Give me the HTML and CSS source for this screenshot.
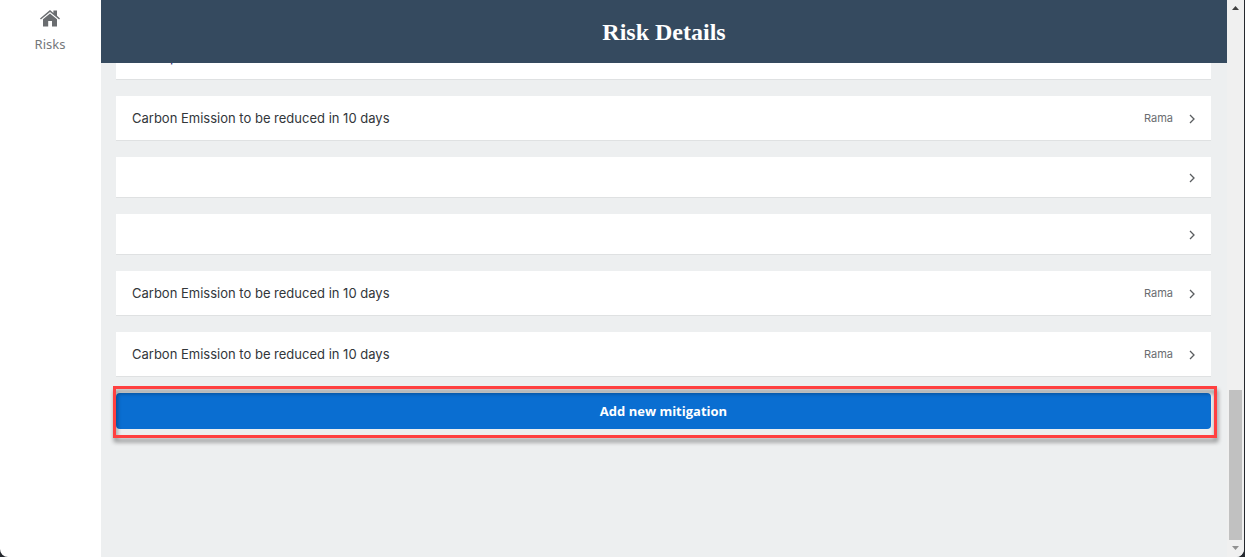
FILE: index.html
```
<!DOCTYPE html>
<html lang="en">
<head>
<meta charset="utf-8">
<title>Risk Details</title>
<link rel="stylesheet" href="styles.css">
</head>
<body>
<svg class="sprite" aria-hidden="true">
  <symbol id="chevron" viewBox="0 0 6 10"><path d="M1 1l4 4-4 4" fill="none" stroke="currentColor" stroke-width="1.3"/></symbol>
</svg>
<div class="window">
  <nav class="sidebar">
    <a class="nav-item" href="#risks">
      <svg class="home" viewBox="0 0 20 17" aria-hidden="true">
        <path d="M10 3.4 17 9.2V16.4H12V11H8.2V16.4H3V9.2Z"/>
        <path d="M0 8.4 10 0l3.4 2.9V.6H17V5.8L20 8.4l-.9 1.1L10 1.9.9 9.5Z"/>
      </svg>
      <span>Risks</span>
    </a>
  </nav>
  <main class="main">
    <header class="header"><h1>Risk Details</h1></header>
    <div class="content">
      <div class="scrolled">
        <ul class="list">
          <li><a class="card" href="#m1"><span class="title linked">To be planned</span><svg class="chevron"><use href="#chevron"/></svg></a></li>
          <li><a class="card" href="#m2"><span class="title">Carbon Emission to be reduced in 10 days</span><span class="owner">Rama</span><svg class="chevron"><use href="#chevron"/></svg></a></li>
          <li><a class="card empty" href="#m3" aria-label="Mitigation"><svg class="chevron"><use href="#chevron"/></svg></a></li>
          <li><a class="card empty" href="#m4" aria-label="Mitigation"><svg class="chevron"><use href="#chevron"/></svg></a></li>
          <li><a class="card" href="#m5"><span class="title">Carbon Emission to be reduced in 10 days</span><span class="owner">Rama</span><svg class="chevron"><use href="#chevron"/></svg></a></li>
          <li><a class="card" href="#m6"><span class="title">Carbon Emission to be reduced in 10 days</span><span class="owner">Rama</span><svg class="chevron"><use href="#chevron"/></svg></a></li>
        </ul>
        <div class="action">
          <button class="add" type="button">Add new mitigation</button>
          <div class="highlight"></div>
        </div>
      </div>
    </div>
  </main>
  <div class="scrollbar" aria-hidden="true">
    <svg class="arrow" viewBox="0 0 7 4"><path d="M0 4 3.5 0 7 4Z"/></svg>
    <div class="track"><div class="thumb"></div></div>
    <svg class="arrow down" viewBox="0 0 7 4"><path d="M0 0 3.5 4 7 0Z"/></svg>
  </div>
</div>
</body>
</html>
```
FILE: styles.css
```
* { box-sizing: border-box; }
body {
  margin: 0;
  background: #25282e;
  font-family: "Noto Sans", sans-serif;
  font-size: 13px;
}
.sprite { position: absolute; width: 0; height: 0; }
.window {
  display: grid;
  grid-template-columns: 101px 1fr 17px;
  height: 100vh;
  margin-right: 1px;
  overflow: hidden;
  border-radius: 0 0 8px 8px;
  background: #fff;
}
.sidebar { padding: 10px 1px 0 0; }
.nav-item {
  display: flex;
  flex-direction: column;
  align-items: center;
  gap: 8px;
  color: #74777a;
  line-height: 18px;
  text-decoration: none;
}
.home { width: 20px; height: 17px; fill: #6a6d70; }
.main {
  display: flex;
  flex-direction: column;
  min-width: 0;
  min-height: 0;
  background: #edeff0;
}
.header {
  flex: none;
  padding: 17px 16px 15px;
  background: #354a5f;
  color: #fff;
  text-align: center;
}
.header h1 {
  margin: 0;
  font: bold 24px/31px "Liberation Serif", serif;
}
.content { flex: 1; min-height: 0; overflow: hidden; padding: 0 16px 0 15px; }
.scrolled { margin-top: -28px; }
.list {
  display: flex;
  flex-direction: column;
  gap: 16px;
  margin: 0;
  padding: 0;
  list-style: none;
}
.card {
  display: flex;
  align-items: center;
  gap: 16px;
  padding: 12px 16px;
  border-bottom: 1px solid #dfe1e2;
  background: #fff;
  color: #32363a;
  line-height: 20px;
  text-decoration: none;
}
.card.empty { justify-content: flex-end; min-height: 41px; }
.title { flex: 1; font-family: Inter, sans-serif; }
.linked { color: #2a2a7a; }
.owner { color: #6a6d70; font-family: Inter, sans-serif; font-size: 11px; }
.chevron { width: 6px; height: 10px; margin-top: 1px; color: #5a5d60; }
.action { position: relative; margin-top: 16px; }
.add {
  display: block;
  width: 100%;
  height: 36px;
  border: 0;
  border-radius: 4px;
  background: #0a6ed1;
  color: #fff;
  font: bold 13px/18px "Open Sans", sans-serif;
}
.highlight {
  position: absolute;
  inset: -7px -6px -9px -3px;
  border: 3px solid #ff4040;
  filter: drop-shadow(1px 4px 2px rgba(0, 0, 0, .45));
  pointer-events: none;
}
.scrollbar {
  display: flex;
  flex-direction: column;
  align-items: center;
  padding: 6px 2px 7px;
  background: #f0f0f0;
}
.arrow { width: 7px; height: 4px; fill: #404040; }
.arrow.down { fill: #909090; }
.track {
  display: flex;
  flex: 1;
  flex-direction: column;
  justify-content: flex-end;
  width: 100%;
  padding-bottom: 6px;
}
.thumb { height: 150px; background: #c1c1c1; }
```
